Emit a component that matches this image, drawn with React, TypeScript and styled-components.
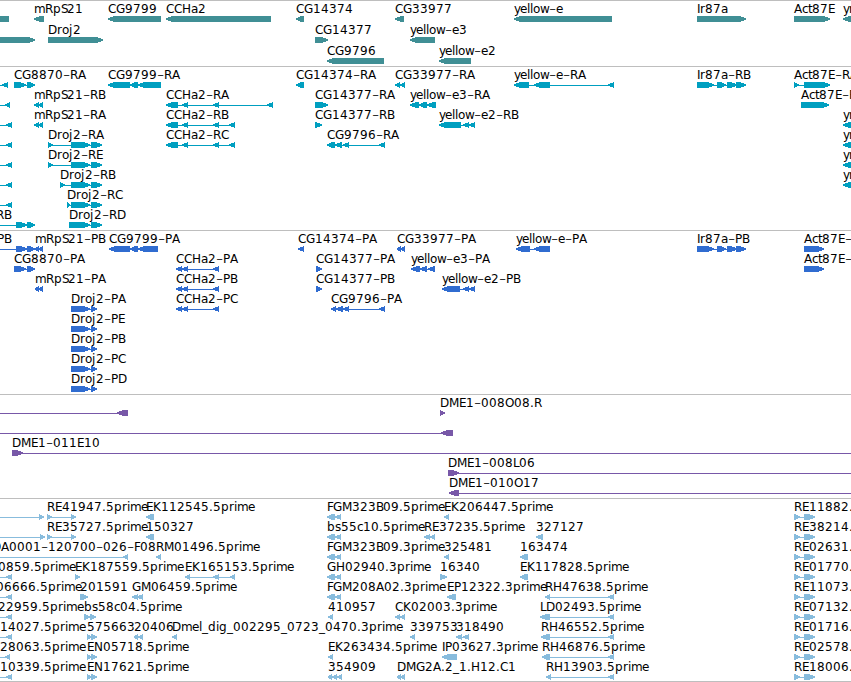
import { FC, Fragment } from "react";
import styled, { createGlobalStyle } from "styled-components";

type Exon = [number, number];

interface FeatureI {
  name?: string;
  x?: number;
  dir: "L" | "R";
  exons: Exon[];
}

interface TrackI {
  id: string;
  color: string;
  laneHeight: number;
  pad: number;
  lanes: FeatureI[][];
}

const GlobalStyle = createGlobalStyle`
  body {
    margin: 0;
    background: #fff;
    overflow: hidden;
  }
`;

const Viewer = styled.main`
  width: 851px;
  height: 682px;
  display: flex;
  flex-direction: column;
  overflow: hidden;
  background: #fff;
  border-bottom: 1px solid #bebebe;
  box-sizing: border-box;
`;

const TrackWrap = styled.section<{ $color: string; $pad: number }>`
  flex: none;
  display: flex;
  flex-direction: column;
  border-top: 1px solid #bebebe;
  padding-bottom: ${({ $pad }) => $pad}px;
  color: ${({ $color }) => $color};
`;

const LaneSvg = styled.svg<{ $height: number }>`
  display: block;
  width: 851px;
  height: ${({ $height }) => $height}px;
  overflow: visible;
`;

const Label = styled.text`
  font-family: "DejaVu Sans", sans-serif;
  font-size: 12px;
  font-kerning: none;
  fill: #000;
`;

const Hyphen = styled.tspan`
  font-weight: 200;
  font-size: 20px;
`;

const Glyph = styled.polygon`
  fill: currentColor;
  shape-rendering: crispEdges;
`;

const Intron = styled.rect`
  fill: currentColor;
  shape-rendering: crispEdges;
`;

// horizontal advance of each character, everything else is 8px
const ADVANCE: Record<string, number> = {
  G: 9, D: 9, N: 9, H: 9, O: 9, M: 10,
  E: 7, B: 7, P: 7, F: 6, L: 6, S: 6, I: 3,
  m: 11, w: 9, e: 7, o: 7, a: 7, c: 6, s: 6, y: 6,
  r: 5, t: 4, j: 4, i: 3, l: 3,
  ".": 4, "-": 7, _: 6,
};

const BASELINE = 12;
const TOP = 15;

const arrowPoints = ([a, b]: Exon, dir: "L" | "R"): string => {
  const w = b - a;
  const head = w < 8 ? w : Math.min(w - 3, 7);
  const tip = dir === "L" ? a : b;
  const back = dir === "L" ? b : a;
  const step = dir === "L" ? 1 : -1;
  const neck = tip + step * head;
  const mid = tip + step * head * 0.5;
  return [
    [tip, TOP + 2.4],
    [mid, TOP + 1],
    [neck, TOP],
    [back, TOP],
    [back, TOP + 6],
    [neck, TOP + 6],
    [mid, TOP + 5],
    [tip, TOP + 3.6],
  ]
    .map((p) => p.join(","))
    .join(" ");
};

const f = (name: string, dir: "L" | "R", ...exons: Exon[]): FeatureI => ({ name, dir, exons });
const at = (x: number, feature: FeatureI): FeatureI => ({ ...feature, x });
// feature that enters from the left edge of the view
const left = (dir: "L" | "R", ...exons: Exon[]): FeatureI => ({
  dir,
  exons: [[-30, -20], ...exons],
});

const yn = f("yn", "L", [843, 860]);
const droj: Exon[] = [[71, 90], [91, 102]];
const ir87a: Exon[] = [[697, 714], [717, 726], [727, 737], [736, 746]];
const ccha2: Exon[] = [[166, 178], [182, 188], [213, 219], [229, 235]];
const ccha2P: Exon[] = [[176, 182], [182, 188], [213, 219]];
const drojP: Exon[] = [[71, 90], [91, 97]];
const pair: Exon[] = [[327, 335], [335, 341]];
const act: Exon[] = [[794, 800], [804, 815]];

const tracks: TrackI[] = [
  {
    id: "gene",
    color: "#408f95",
    laneHeight: 21,
    pad: 2,
    lanes: [
      [
        left("L", [-15, 9]),
        f("mRpS21", "L", [34, 44]),
        f("CG9799", "L", [108, 161]),
        f("CCHa2", "L", [166, 271]),
        f("CG14374", "L", [296, 304]),
        f("CG33977", "L", [395, 404]),
        f("yellow-e", "L", [514, 612]),
        f("Ir87a", "R", [697, 746]),
        f("Act87E", "R", [794, 830]),
        yn,
      ],
      [
        left("R", [-10, 35]),
        f("Droj2", "R", [48, 103]),
        f("CG14377", "R", [315, 328]),
        f("yellow-e3", "L", [410, 435]),
      ],
      [f("CG9796", "L", [327, 384]), f("yellow-e2", "L", [439, 471])],
    ],
  },
  {
    id: "transcript",
    color: "#009fc0",
    laneHeight: 20,
    pad: 3,
    lanes: [
      [
        left("L", [2, 8]),
        f("CG8870-RA", "R", [14, 26], [27, 35]),
        f("CG9799-RA", "L", [108, 130], [130, 138], [138, 161]),
        f("CG14374-RA", "L", [296, 304]),
        f("CG33977-RA", "L", [395, 400], [400, 405]),
        f("yellow-e-RA", "L", [514, 529], [534, 550], [608, 614]),
        f("Ir87a-RB", "R", ...ir87a),
        f("Act87E-RA", "R", [794, 799], [804, 830]),
      ],
      [
        left("L", [5, 10]),
        f("mRpS21-RB", "L", [34, 39], [39, 43]),
        f("CCHa2-RA", "L", [166, 178], [182, 188], [213, 219], [267, 273]),
        f("CG14377-RA", "R", [315, 328]),
        f("yellow-e3-RA", "L", [410, 419], [419, 427], [427, 436]),
        f("Act87E-RB", "R", [801, 829]),
      ],
      [
        left("L", [6, 12]),
        f("mRpS21-RA", "L", [34, 39], [39, 43]),
        f("CCHa2-RB", "L", ...ccha2),
        f("CG14377-RB", "R", [315, 322]),
        f("yellow-e2-RB", "L", [439, 461], [463, 469], [469, 475]),
        yn,
      ],
      [
        left("L", [6, 12]),
        f("Droj2-RA", "R", [48, 53], ...droj),
        f("CCHa2-RC", "L", ...ccha2),
        f("CG9796-RA", "L", [327, 335], [335, 342], [343, 349], [379, 385]),
        yn,
      ],
      [left("L", [6, 12]), f("Droj2-RE", "R", [48, 53], ...droj), yn],
      [left("L", [6, 12]), f("Droj2-RB", "R", [60, 65], ...droj), yn],
      [left("L", [6, 12]), f("Droj2-RC", "R", [67, 70], ...droj)],
      [
        at(-4, { ...left("R", [16, 27], [27, 35]), name: "RB" }),
        f("Droj2-RD", "R", [69, 90], [91, 102]),
      ],
    ],
  },
  {
    id: "protein",
    color: "#306cd0",
    laneHeight: 20,
    pad: 3,
    lanes: [
      [
        at(-3, { ...left("R", [16, 27], [27, 35]), name: "PB" }),
        f("mRpS21-PB", "L", [35, 39], [39, 43]),
        f("CG9799-PA", "L", [109, 130], [130, 138], [138, 158]),
        f("CG14374-PA", "L", [298, 304]),
        f("CG33977-PA", "L", [397, 401], [401, 405]),
        f("yellow-e-PA", "L", [516, 530], [534, 550]),
        f("Ir87a-PB", "R", ...ir87a),
        f("Act87E-PA", "R", [804, 824]),
      ],
      [
        f("CG8870-PA", "R", [14, 26], [27, 35]),
        f("CCHa2-PA", "L", ...ccha2P),
        f("CG14377-PA", "R", [316, 322]),
        f("yellow-e3-PA", "L", [411, 420], [420, 427], [428, 435]),
        f("Act87E-PB", "R", [804, 824]),
      ],
      [
        f("mRpS21-PA", "L", [35, 39], [39, 43]),
        f("CCHa2-PB", "L", ...ccha2P),
        f("CG14377-PB", "R", [316, 322]),
        f("yellow-e2-PB", "L", [442, 460], [463, 469], [469, 475]),
      ],
      [
        f("Droj2-PA", "R", ...drojP),
        f("CCHa2-PC", "L", ...ccha2P),
        f("CG9796-PA", "L", [331, 336], [336, 343], [343, 349], [379, 385]),
      ],
      [f("Droj2-PE", "R", ...drojP)],
      [f("Droj2-PB", "R", ...drojP)],
      [f("Droj2-PC", "R", ...drojP)],
      [f("Droj2-PD", "R", ...drojP)],
    ],
  },
  {
    id: "clone",
    color: "#7858a8",
    laneHeight: 20,
    pad: 3,
    lanes: [
      [left("L", [117, 128]), f("DME1-008O08.R", "R", [440, 445])],
      [left("L", [441, 453])],
      [f("DME1-011E10", "R", [12, 23], [860, 870])],
      [f("DME1-008L06", "R", [448, 459], [860, 870])],
      [f("DME1-010O17", "L", [449, 459], [860, 870])],
    ],
  },
  {
    id: "est",
    color: "#88bcdd",
    laneHeight: 20,
    pad: 2,
    lanes: [
      [
        left("R", [39, 44]),
        f("RE41947.5prime", "R", [47, 52], [71, 76]),
        f("EK112545.5prime", "L", [146, 154]),
        f("FGM323B09.5prime", "L", ...pair),
        f("EK206447.5prime", "L", [444, 449]),
        f("RE11882.5prime", "R", ...act),
      ],
      [
        left("R", [40, 45]),
        f("RE35727.5prime", "R", [47, 52], [71, 76]),
        f("150327", "L", [146, 154]),
        f("bs55c10.5prime", "L", ...pair),
        f("RE37235.5prime", "L", [424, 430], [430, 435]),
        f("327127", "L", [536, 543]),
        f("RE38214.5prime", "R", ...act),
      ],
      [
        at(-8, { ...left("L", [123, 128]), name: "DA0001-120700-026-F08" }),
        f("RM01496.5prime", "L", [156, 161]),
        f("FGM323B09.3prime", "L", ...pair),
        f("325481", "L", [444, 449]),
        f("163474", "L", [520, 528]),
        f("RE02631.5prime", "R", ...act),
      ],
      [
        at(-2, { ...left("L", [6, 12]), name: "0859.5prime" }),
        f("EK187559.5prime", "R", [75, 80]),
        f("EK165153.5prime", "L", [185, 190], [213, 219], [230, 235]),
        f("GH02940.3prime", "L", ...pair),
        f("16340", "R", [440, 447]),
        f("EK117828.5prime", "L", [520, 528]),
        f("RE01770.5prime", "R", ...act),
      ],
      [
        at(-4, { ...left("L", [6, 12]), name: "06666.5prime" }),
        f("201591", "R", [80, 88]),
        f("GM06459.5prime", "L", [132, 138], [137, 143]),
        f("FGM208A02.3prime", "L", ...pair),
        f("EP12322.3prime", "L", [447, 456]),
        f("RH47638.5prime", "L", [545, 550], [608, 614]),
        f("RE11073.5prime", "R", ...act),
      ],
      [
        at(-2, { ...left("L", [6, 12]), name: "22959.5prime" }),
        f("bs58c04.5prime", "R", [84, 90], [90, 96]),
        f("410957", "L", [328, 333]),
        f("CK02003.3prime", "L", [395, 400], [400, 405]),
        f("LD02493.5prime", "L", [540, 550], [608, 614]),
        f("RE07132.5prime", "R", ...act),
      ],
      [
        at(0, { ...left("L", [6, 12]), name: "14027.5prime" }),
        f("575663", "R", [87, 91], [91, 97]),
        f("20406", "L", [134, 138], [138, 143]),
        f("Dmel_dig_002295_0723_0470.3prime", "L", [172, 177]),
        f("339753", "L", [410, 415]),
        f("318490", "L", [456, 462], [463, 469]),
        f("RH46552.5prime", "L", [541, 550], [608, 614]),
        f("RE01716.5prime", "R", ...act),
      ],
      [
        at(0, { ...left("L", [5, 10]), name: "28063.5prime" }),
        f("EN05718.5prime", "R", [87, 91], [91, 97]),
        f("EK263434.5prime", "L", [328, 333]),
        f("IP03627.3prime", "L", [442, 457]),
        f("RH46876.5prime", "L", [542, 550], [608, 614]),
        f("RE02578.5prime", "R", ...act),
      ],
      [
        at(0, { ...left("L", [6, 12]), name: "10339.5prime" }),
        f("EN17621.5prime", "R", [87, 91], [91, 97]),
        f("354909", "L", [328, 332], [332, 337], [337, 342]),
        f("DMG2A.2_1.H12.C1", "L", [397, 401], [401, 405]),
        f("RH13903.5prime", "L", [546, 551], [608, 614]),
        f("RE18006.5prime", "R", ...act),
      ],
    ],
  },
];

const FeatureLabel: FC<{ name: string; x: number }> = ({ name, x }) => {
  let pos = x;
  const parts = name.split(/(-)/).map((part) => ({
    part,
    xs: part.split("").map((c) => {
      const start = pos;
      pos += ADVANCE[c] ?? 8;
      return start;
    }),
  }));
  return (
    <Label>
      {parts.map(({ part, xs }, key) => (
        <Fragment key={key}>
          {part === "-" ? (
            <Hyphen x={xs[0]} y={BASELINE + 2}>-</Hyphen>
          ) : (
            <tspan x={xs.join(" ")} y={BASELINE}>{part}</tspan>
          )}
        </Fragment>
      ))}
    </Label>
  );
};

const Feature: FC<{ data: FeatureI }> = ({ data }) => {
  const { name, dir, exons } = data;
  const start = exons[0][0];
  const end = exons[exons.length - 1][1];
  return (
    <g>
      {exons.length > 1 && (
        <Intron x={start} y={TOP + 3} width={end - start} height={1} />
      )}
      {exons.map((exon, key) => (
        <Glyph key={key} points={arrowPoints(exon, dir)} />
      ))}
      {name && <FeatureLabel name={name} x={data.x ?? start} />}
    </g>
  );
};

const Track: FC<{ track: TrackI }> = ({ track }) => (
  <TrackWrap $color={track.color} $pad={track.pad}>
    {track.lanes.map((lane, key) => (
      <LaneSvg key={key} $height={track.laneHeight}>
        {lane.map((data, i) => (
          <Feature key={i} data={data} />
        ))}
      </LaneSvg>
    ))}
  </TrackWrap>
);

const App: FC = () => (
  <>
    <GlobalStyle />
    <Viewer>
      {tracks.map((track) => (
        <Track key={track.id} track={track} />
      ))}
    </Viewer>
  </>
);

export default App;
